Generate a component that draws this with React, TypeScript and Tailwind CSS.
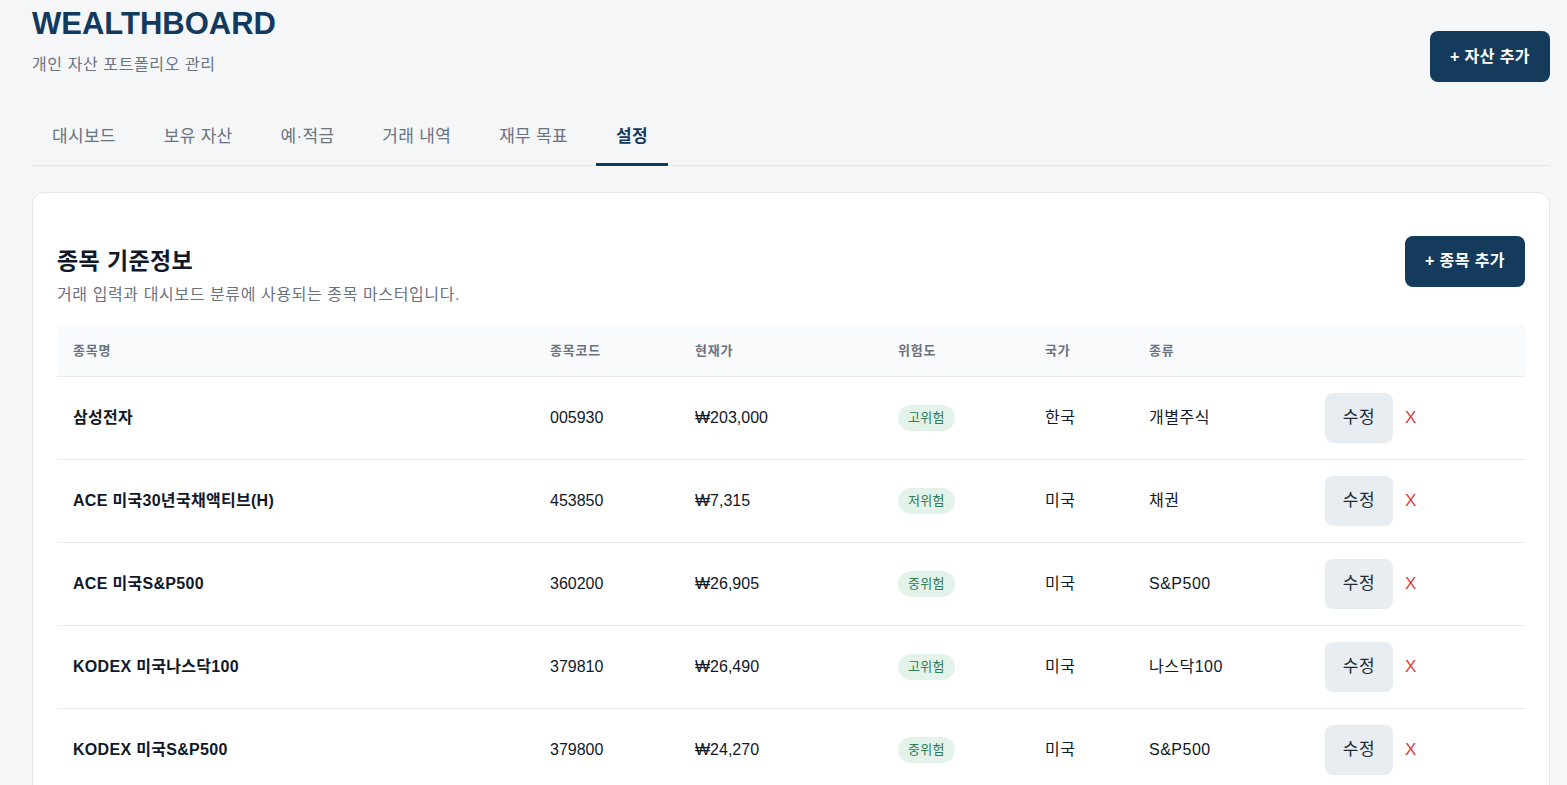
import React from "react";

const rows = [
  { name: "삼성전자", code: "005930", price: "₩203,000", risk: "고위험", country: "한국", kind: "개별주식" },
  { name: "ACE 미국30년국채액티브(H)", code: "453850", price: "₩7,315", risk: "저위험", country: "미국", kind: "채권" },
  { name: "ACE 미국S&P500", code: "360200", price: "₩26,905", risk: "중위험", country: "미국", kind: "S&P500" },
  { name: "KODEX 미국나스닥100", code: "379810", price: "₩26,490", risk: "고위험", country: "미국", kind: "나스닥100" },
  { name: "KODEX 미국S&P500", code: "379800", price: "₩24,270", risk: "중위험", country: "미국", kind: "S&P500" },
];

const tabs = ["대시보드", "보유 자산", "예·적금", "거래 내역", "재무 목표", "설정"];

export default function App() {
  return (
    <div
      className="min-h-screen bg-[#f4f6f8] pl-8 pr-[17px] text-[#111827]"
      style={{ fontFamily: '"Liberation Sans", "Noto Sans CJK KR", sans-serif' }}
    >
      <header className="flex items-start justify-between pt-[5px]">
        <div>
          <h1 className="text-[31px] font-bold leading-[38px] text-[#12395e]">WEALTHBOARD</h1>
          <p className="mt-[12px] text-[16px] leading-5 tracking-[0.6px] text-[#6b7280]">개인 자산 포트폴리오 관리</p>
        </div>
        <button className="mt-[26px] h-[51px] w-[120px] rounded-lg bg-[#143a5c] text-[16px] font-semibold tracking-[0.4px] text-white">
          + 자산 추가
        </button>
      </header>

      <nav className="mt-[35px] flex gap-2 border-b border-[#e2e5e9]">
        {tabs.map((t) => {
          const active = t === "설정";
          return (
            <div
              key={t}
              className={
                active
                  ? "mb-[-1px] border-b-[3px] border-[#12395e] px-5 pb-[13px] pt-[7px] text-[17px] font-bold tracking-[0.3px] text-[#12395e]"
                  : "mb-[-1px] border-b-[3px] border-transparent px-5 pb-[13px] pt-[7px] text-[17px] tracking-[0.3px] text-[#6b7280]"
              }
            >
              {t}
            </div>
          );
        })}
      </nav>

      <section className="mt-[26px] rounded-xl border border-[#e5e7eb] bg-white px-6 pb-6 pt-[43px]">
        <div className="flex items-start justify-between">
          <div className="pt-[10px]">
            <h2 className="text-[23px] font-bold leading-[30px] tracking-[0.4px] text-[#111827]">종목 기준정보</h2>
            <p className="mt-[9px] text-[16px] leading-5 tracking-[0.6px] text-[#6b7280]">
              거래 입력과 대시보드 분류에 사용되는 종목 마스터입니다.
            </p>
          </div>
          <button className="h-[51px] w-[120px] rounded-lg bg-[#143a5c] text-[16px] font-semibold tracking-[0.4px] text-white">
            + 종목 추가
          </button>
        </div>

        <table className="mt-[20px] w-full table-fixed border-collapse">
          <colgroup>
            <col className="w-[477px]" />
            <col className="w-[145px]" />
            <col className="w-[203px]" />
            <col className="w-[147px]" />
            <col className="w-[104px]" />
            <col className="w-[176px]" />
            <col />
          </colgroup>
          <thead>
            <tr className="h-[52px] border-b border-[#e8ebef] bg-[#f9fafb] text-left">
              {["종목명", "종목코드", "현재가", "위험도", "국가", "종류", ""].map((h, i) => (
                <th key={i} className="px-4 text-[13px] font-bold tracking-[0.8px] text-[#6b7280]">
                  {h}
                </th>
              ))}
            </tr>
          </thead>
          <tbody>
            {rows.map((r) => (
              <tr key={r.code} className="border-b border-[#e8ebef] text-[16px]">
                <td className="px-4 py-4 font-bold tracking-[0.3px]">{r.name}</td>
                <td className="px-4 py-4">{r.code}</td>
                <td className="px-4 py-4">{r.price}</td>
                <td className="px-4 py-4">
                  <span className="inline-flex h-[26px] items-center rounded-full bg-[#e3f3ea] px-[10px] text-[13px] tracking-[0.3px] text-[#2e7d57]">
                    {r.risk}
                  </span>
                </td>
                <td className="px-4 py-4 tracking-[0.6px]">{r.country}</td>
                <td className="px-4 py-4 tracking-[0.5px]">{r.kind}</td>
                <td className="px-4 py-4">
                  <div className="flex items-center gap-[12px]">
                    <button className="h-[50px] w-[68px] rounded-lg bg-[#e8edf2] text-[17px] tracking-[0.5px] text-[#1f2937]">수정</button>
                    <span className="text-[17px] text-[#d9403a]">X</span>
                  </div>
                </td>
              </tr>
            ))}
          </tbody>
        </table>
      </section>
    </div>
  );
}
